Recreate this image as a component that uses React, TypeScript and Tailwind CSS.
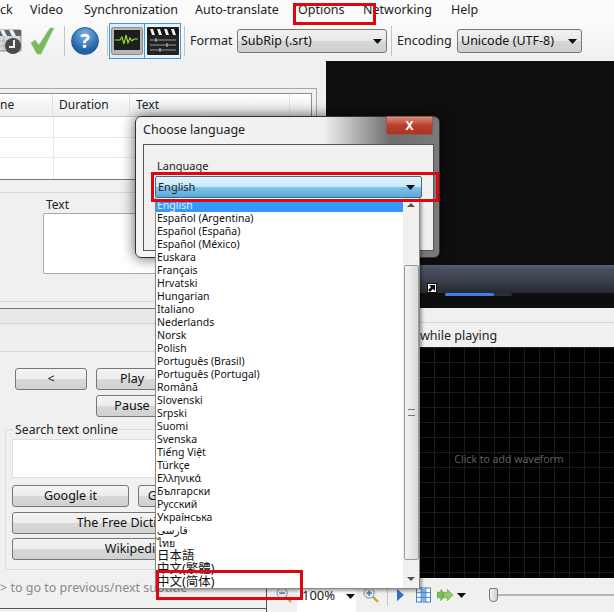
const ui = `"Noto Sans", "Noto Sans CJK SC", "DejaVu Sans", sans-serif`;

const languages = [
  "English", "Español (Argentina)", "Español (España)", "Español (México)", "Euskara", "Français",
  "Hrvatski", "Hungarian", "Italiano", "Nederlands", "Norsk", "Polish", "Português (Brasil)",
  "Português (Portugal)", "Română", "Slovenski", "Srpski", "Suomi", "Svenska", "Tiếng Việt", "Türkçe",
  "Ελληνικά", "Български", "Русский", "Українська", "فارسی", "ไทย", "日本語", "中文(繁體)", "中文(简体)",
];

const menu = [
  { label: "ck", w: "w-[30px]" },
  { label: "Video", w: "w-[54px]" },
  { label: "Synchronization", w: "w-[111px]" },
  { label: "Auto-translate", w: "w-[103px]" },
  { label: "Options", w: "w-[65px]" },
  { label: "Networking", w: "w-[88px]" },
  { label: "Help", w: "w-[50px]" },
];

function Sep() {
  return <div className="h-[30px] w-px bg-[#c4c4c4]" />;
}

function Caret({ className = "" }: { className?: string }) {
  return (
    <svg width="9" height="5" viewBox="0 0 9 5" className={className}>
      <path d="M0 0h9L4.5 5z" fill="#111" />
    </svg>
  );
}

function Combo({ label, className }: { label: string; className: string }) {
  return (
    <div className={`flex h-[24px] items-center justify-between rounded-[3px] border border-[#777] bg-[linear-gradient(#f2f2f2,#e8e8e8_48%,#d6d6d6_52%,#cfcfcf)] pl-[3px] pr-[4px] text-[12.5px] text-[#111] ${className}`}>
      <span>{label}</span>
      <Caret />
    </div>
  );
}

function Btn({ label, className }: { label: string; className: string }) {
  return (
    <div className={`flex h-[22px] items-center justify-center overflow-hidden whitespace-nowrap rounded-[3px] border border-[#777] bg-[linear-gradient(#f4f4f4,#ececec_48%,#d8d8d8_52%,#d0d0d0)] text-[12.5px] text-[#111] ${className}`}>
      {label}
    </div>
  );
}

function ClapperClock() {
  return (
    <svg width="23" height="28" viewBox="0 0 23 28">
      <rect x="-8" y="3" width="29" height="21" rx="1" fill="#d8d8d8" stroke="#888" />
      <path d="M-8 3h29v6H-8z" fill="#59636b" />
      <path d="M0 3l3 6h4L4 3zM9 3l3 6h4l-3-6z" fill="#e8f0f4" />
      <path d="M-8 14h29M-8 19h29M4 9v15M12 9v15" stroke="#b5b5b5" />
      <circle cx="13" cy="19" r="8" fill="#4a4a4a" />
      <path d="M13 13v6h-4v2h6v-8z" fill="#f0f0f0" />
    </svg>
  );
}

function Check() {
  return (
    <svg width="25" height="28" viewBox="0 0 25 28">
      <path d="M1 16l4-3 4 5L20 1h4L11 27H7z" fill="#7ab85c" stroke="#94c97c" strokeWidth="0.6" />
    </svg>
  );
}

function ScopeIcon() {
  return (
    <svg width="32" height="28" viewBox="0 0 32 28">
      <rect x="0.5" y="0.5" width="31" height="27" rx="2" fill="#b5b5b5" stroke="#8d8d8d" />
      <rect x="3" y="3" width="26" height="20" fill="#1c1f1c" />
      <path d="M4 13h5l2-3 2 7 2-9 2 8 2-5 2 3 2-2h4" fill="none" stroke="#9be22e" strokeWidth="1.1" />
    </svg>
  );
}

function FilmIcon() {
  return (
    <svg width="32" height="28" viewBox="0 0 32 28">
      <rect x="0" y="0" width="32" height="28" rx="1" fill="#222" />
      <path d="M1 2h30v6H1z" fill="#111" />
      <path d="M3 2h3l2 6H5zM10 2h3l2 6h-3zM17 2h3l2 6h-3zM24 2h3l2 6h-3z" fill="#eee" />
      <path d="M3 13h26M3 18h26M3 23h26" stroke="#999" />
      <path d="M9 11v4M20 16v4M13 21v4" stroke="#ccc" />
    </svg>
  );
}

function Lens({ plus }: { plus?: boolean }) {
  return (
    <svg width="16" height="16" viewBox="0 0 17 17">
      <path d="M10 10l6 6" stroke="#c9a13c" strokeWidth="2.4" />
      <circle cx="6.5" cy="6.5" r="5.5" fill="#dfe9f2" stroke="#7e8b98" />
      <path d="M3.5 6.5h6" stroke="#4c78a8" strokeWidth="1.6" />
      {plus && <path d="M6.5 3.5v6" stroke="#4c78a8" strokeWidth="1.6" />}
    </svg>
  );
}

function Header() {
  return (
    <>
      <div className="flex h-[21px] items-center bg-[#fbfbfb] text-[12.5px] text-[#222]">
        {menu.map((m) => (
          <div key={m.label} className={`${m.w} shrink-0 whitespace-nowrap`}>
            {m.label}
          </div>
        ))}
      </div>
      <div className="flex h-[40px] items-center bg-[linear-gradient(#fafafa,#f0f0f0)] text-[12.5px] text-[#222]">
        <ClapperClock />
        <div className="ml-[7px]"><Check /></div>
        <div className="ml-[9px]"><Sep /></div>
        <div className="ml-[6px] flex h-[28px] w-[28px] items-center justify-center rounded-full border border-[#2b5f96] bg-[radial-gradient(circle_at_50%_25%,#7db4e6,#1f5fa6_70%)] text-[20px] font-bold leading-none text-white">
          ?
        </div>
        <div className="ml-[8px]"><Sep /></div>
        <div className="ml-px flex h-[36px] w-[36px] items-center justify-center border border-[#3a9be0] bg-[#dfeaf4]"><ScopeIcon /></div>
        <div className="flex h-[36px] w-[36px] items-center justify-center border border-l-0 border-[#3a9be0] bg-[#eef3f8]"><FilmIcon /></div>
        <div className="ml-[3px]"><Sep /></div>
        <span className="ml-[5px] w-[47px]">Format</span>
        <Combo label="SubRip (.srt)" className="w-[150px]" />
        <div className="ml-[4px]"><Sep /></div>
        <span className="ml-[5px] w-[60px]">Encoding</span>
        <Combo label="Unicode (UTF-8)" className="w-[125px]" />
      </div>
    </>
  );
}

function TopLeft() {
  return (
    <div className="w-[326px] shrink-0">
      <div className="mt-[27px] h-[92px] w-[317px] border-r border-t border-[#a8a8a8] pr-[4px] pt-[4px]">
        <div className="h-[87px] border-b border-r border-t border-[#8c8c8c] border-b-[#777] bg-white text-[12px] text-[#222]">
          <div className="flex h-[23px] items-center border-b border-[#ccc] bg-[linear-gradient(#fff,#f4f5f6_40%,#eceef0)]">
            <div className="w-[53px] border-r border-[#e2e2e2] leading-[22px]">ne</div>
            <div className="w-[77px] border-r border-[#e2e2e2] pl-[6px] leading-[22px]">Duration</div>
            <div className="w-[160px] border-r border-[#e2e2e2] pl-[6px] leading-[22px]">Text</div>
          </div>
          <div className="h-[21px] border-b border-[#eaeaea] bg-[linear-gradient(90deg,transparent_53px,#eaeaea_53px,#eaeaea_54px,transparent_54px)]" />
          <div className="h-[20px] border-b border-[#eaeaea] bg-[linear-gradient(90deg,transparent_53px,#eaeaea_53px,#eaeaea_54px,transparent_54px)]" />
          <div className="h-[21px] bg-[linear-gradient(90deg,transparent_53px,#eaeaea_53px,#eaeaea_54px,transparent_54px)]" />
        </div>
      </div>
      <div className="mt-[12px] h-[109px] border-t border-[#d8d8d8] pl-[43px]">
        <div className="ml-[3px] mt-[4px] h-[16px] text-[12px] leading-[16px] text-[#222]">Text</div>
        <div className="h-[61px] w-[250px] rounded-[2px] border border-[#a8a8a8] bg-white" />
      </div>
      <div className="h-[7px] border-t border-[#d8d8d8]" />
      <div className="h-[15px] border-t border-[#777] bg-[#e9e9e9]" />
      <div className="h-[23px] border-t border-[#d5d5d5] bg-[#eeeeee]" />
    </div>
  );
}

function Video() {
  return (
    <div className="flex-1">
      <div className="h-[204px] bg-[#0f0f0f]" />
      <div className="relative h-[28px] bg-[linear-gradient(#5d6273,#4a5060_15%,#3d424f_50%,#262933)]">
        <div className="absolute bottom-0 left-[101px] flex h-[10px] w-[10px] items-center justify-center border border-[#111] bg-white">
          <svg width="8" height="8" viewBox="0 0 8 8"><path d="M1 1h6v6L5 5 2 8 0 6l3-3z" fill="#111" /></svg>
        </div>
      </div>
      <div className="relative h-[15px] bg-[#0e0e0e]">
        <div className="absolute left-[119px] top-0 h-[3px] w-[67px] rounded-full bg-[#2b2f38]">
          <div className="h-full w-[49px] rounded-full bg-[#3f7fe8]" />
        </div>
      </div>
      <div className="h-[15px] border-b border-[#d8d8d8] bg-[#f0f0f0]" />
      <div className="flex h-[24px] items-center bg-[#f0f0f0] pl-[94px] pt-[2px] text-[12.5px] text-[#222]">while playing</div>
    </div>
  );
}

function BottomLeft() {
  return (
    <div className="h-[265px] w-[267px] shrink-0 border-r border-[#555]">
      <div className="h-[5px] border-b border-[#d8d8d8] bg-[#eeeeee]" />
      <div className="flex gap-[9px] pl-[15px] pt-[16px]">
        <Btn label="<" className="w-[72px]" />
        <Btn label="Play" className="w-[72px]" />
      </div>
      <Btn label="Pause" className="ml-[96px] mt-[5px] w-[72px]" />
      <div className="relative ml-[5px] mt-[12px] h-[141px] w-[257px] rounded-[3px] border border-[#dcdcdc] px-[6px] pt-[9px]">
        <span className="absolute -top-[8px] left-[8px] bg-[#f0f0f0] px-[1px] text-[12.25px] leading-[16px] text-[#222]">Search text online</span>
        <div className="h-[39px] border border-[#dedede] bg-white" />
        <div className="mt-[7px] flex gap-[9px]">
          <Btn label="Google it" className="w-[117px]" />
          <Btn label="Google translate" className="w-[117px]" />
        </div>
        <Btn label="The Free Dictionary" className="mt-[5px] w-[243px]" />
        <Btn label="Wikipedia" className="mt-[4px] w-[243px]" />
      </div>
      <div className="mt-[9px] h-[22px] whitespace-nowrap text-[12.5px] leading-[18px] text-[#8a8a8a]">&gt; to go to previous/next subtitle</div>
      <div className="mt-[7px] h-[2px] border-t border-[#555]" />
    </div>
  );
}

function Wave() {
  return (
    <div className="flex min-w-0 flex-1 flex-col">
      <div className="ml-[137px] flex h-[231px] items-center justify-center bg-black bg-[linear-gradient(#1c1c1c_1px,transparent_1px),linear-gradient(90deg,#1c1c1c_1px,transparent_1px)] bg-[size:15px_15px] pb-[6px] text-[10.5px] text-[#5f5f5f]">
        Click to add waveform
      </div>
      <div className="flex h-[34px] items-center bg-[#f0f0f0] pl-[9px] text-[13px] text-[#222]">
        <Lens />
        <div className="ml-[5px] flex h-[23px] w-[59px] items-center justify-between self-end bg-white pb-[9px] pl-[5px] pr-[1px]">
          <span>100%</span>
          <Caret />
        </div>
        <div className="ml-[7px]"><Lens plus /></div>
        <div className="ml-[8px] h-[22px] w-px bg-[#c8c8c8]" />
        <svg width="7" height="14" viewBox="0 0 8 14" className="ml-[9px]"><path d="M0 0l8 7-8 7z" fill="#2f6fd0" /></svg>
        <svg width="15" height="16" viewBox="0 0 16 16" className="ml-[12px]">
          <rect x="0.5" y="0.5" width="15" height="15" fill="#fff" stroke="#3a7cc8" />
          <path d="M6 1h4v14H6z" fill="#7fb2e6" />
          <path d="M0 5.5h16M0 10.5h16M5.5 0v16M10.5 0v16" stroke="#3a7cc8" />
        </svg>
        <svg width="16" height="12" viewBox="0 0 17 12" className="ml-[6px]">
          <path d="M0 3h4V0l5 6-5 6V9H0z" fill="#7cbb4f" stroke="#4e8a2f" strokeWidth="0.5" />
          <path d="M7 3h4V0l6 6-6 6V9H7z" fill="#8fcc5c" stroke="#4e8a2f" strokeWidth="0.5" />
        </svg>
        <Caret className="ml-[4px]" />
        <div className="ml-[23px] flex flex-1 items-center">
          <div className="h-[14px] w-[9px] shrink-0 rounded-b-[4px] rounded-t-[2px] border border-[#777] bg-[linear-gradient(90deg,#f4f4f4,#cfcfcf)]" />
          <div className="h-[2px] flex-1 bg-[#b4b4b4]" />
        </div>
      </div>
    </div>
  );
}

function LanguageDialog() {
  return (
    <div className="absolute left-[135px] top-[116px] h-[142px] w-[305px] rounded-[6px] border border-[#333] bg-[linear-gradient(90deg,#f4f4f4,#f0f0f0_62%,#6e6e6e_84%,#7a7a7a)] pl-[7px] pr-[5px] shadow-[0_0_14px_rgba(0,0,0,0.65)]">
      <div className="absolute right-[6px] top-[-1px] flex h-[19px] w-[47px] items-center justify-center rounded-b-[3px] border border-[#8f5a52] bg-[linear-gradient(#d98b78,#b8402c_50%,#a93422)] text-[12px] font-bold leading-none text-white">
        X
      </div>
      <div className="h-[27px] pt-[4px] text-[12.5px] leading-[18px] text-[#222]">Choose language</div>
      <div className="h-[107px] border border-[#555] bg-[#f0f0f0] px-[11px] pt-[13px] text-[11px] text-[#222]">
        <div className="ml-[2px] h-[18px] leading-[16px]">Language</div>
        <div className="flex h-[22px] w-[267px] items-center justify-between rounded-[2px] border border-[#3d6d8c] bg-[linear-gradient(#e4f4fc,#c6e8fa_48%,#7fc4ec_52%,#5aaad8)] pl-[2px] pr-[6px]">
          <span>English</span>
          <Caret />
        </div>
      </div>
    </div>
  );
}

function LanguageList() {
  return (
    <div className="absolute left-[155px] top-[198px] flex h-[391px] w-[265px] border border-[#888] border-t-0 bg-white shadow-[2px_2px_3px_rgba(0,0,0,0.35)]">
      <div className="flex-1 overflow-hidden pt-px text-[10.5px] text-[#111]">
        {languages.map((l, i) => (
          <div
            key={l}
            className={
              i === 0
                ? "h-[13px] bg-[#3399ff] pl-px leading-[12px] text-[#e8f2ff]"
                : i >= 27
                  ? "h-[13px] whitespace-nowrap pl-px text-[12.5px] leading-[12px]"
                  : "h-[13px] whitespace-nowrap pl-px leading-[12px]"
            }
          >
            {l}
          </div>
        ))}
      </div>
      <div className="flex w-[16px] flex-col items-center bg-[#f0f0f0]">
        <svg width="8" height="4" viewBox="0 0 8 4" className="mt-[5px]"><path d="M0 4h8L4 0z" fill="#555" /></svg>
        <div className="mt-[58px] flex h-[295px] w-[15px] items-center justify-center rounded-[2px] border border-[#999] bg-[linear-gradient(90deg,#f4f4f4,#d8d8d8)]">
          <div className="h-[7px] w-[7px] border-y border-[#777]" />
        </div>
        <svg width="8" height="4" viewBox="0 0 8 4" className="mt-[17px]"><path d="M0 0h8L4 4z" fill="#555" /></svg>
      </div>
    </div>
  );
}

export default function App() {
  return (
    <div className="relative h-[612px] w-[614px] overflow-hidden bg-[#f0f0f0]" style={{ fontFamily: ui }}>
      <Header />
      <div className="flex h-[286px]">
        <TopLeft />
        <Video />
      </div>
      <div className="flex h-[265px]">
        <BottomLeft />
        <Wave />
      </div>

      <LanguageDialog />
      <LanguageList />

      {/* red annotations */}
      <div className="absolute left-[293px] top-[3px] h-[22px] w-[83px] border-[3px] border-[#e0060f]" />
      <div className="absolute left-[151px] top-[172px] h-[30px] w-[288px] border-[3px] border-[#e0060f]" />
      <div className="absolute left-[156px] top-[570px] h-[30px] w-[147px] border-[3px] border-[#e0060f]" />
    </div>
  );
}
